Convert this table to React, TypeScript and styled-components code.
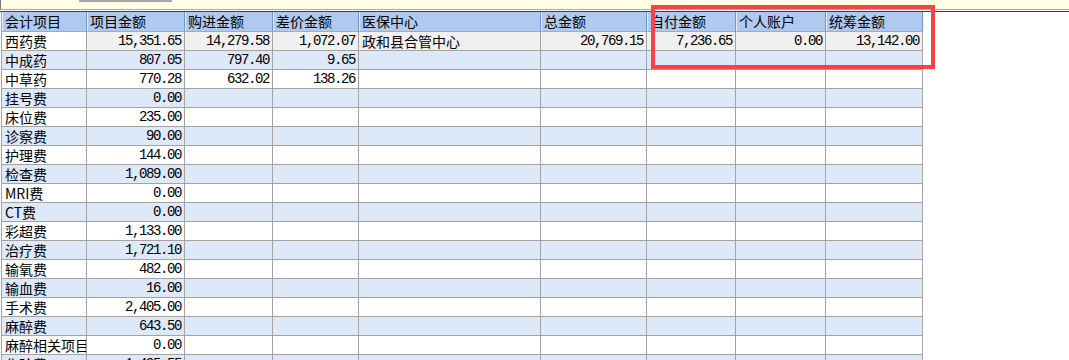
import React from "react";
import styled, { createGlobalStyle, css } from "styled-components";

const GlobalStyle = createGlobalStyle`
  html, body { margin: 0; padding: 0; background: #ffffff; }
  body { font-family: "Noto Sans CJK SC", "Noto Sans", sans-serif; overflow: hidden; }
`;

const Page = styled.div`
  position: relative;
  width: 1069px;
  height: 360px;
  overflow: hidden;
  background: #ffffff;
`;

const TopStrip = styled.div`
  height: 9px;
  background: #fffde6;
  border-left: 1px solid #7a7a7a;
  border-bottom: 1px solid #a8a8a8;
  display: flex;
  align-items: flex-start;
  padding-left: 78px;
`;

const TabStub = styled.div`
  width: 93px;
  height: 2px;
  background: #a6a6a6;
`;

const GridArea = styled.div`
  margin-top: 1px;
  border-top: 1px solid #1d3f9a;
  padding-left: 1px;
`;

const COLS = [85, 98, 88, 86, 182, 106, 89, 90, 97];

const Grid = styled.div`
  display: grid;
  grid-template-columns: ${COLS.map((c) => `${c}px`).join(" ")};
  width: ${COLS.reduce((a, b) => a + b, 0)}px;
  border-left: 1px solid #8aa8d8;
`;

const HeadCell = styled.div`
  box-sizing: border-box;
  height: 20px;
  line-height: 19px;
  padding-left: 3px;
  background: #afcaee;
  border-right: 1px solid #6e94cf;
  border-bottom: 1px solid #8eaee0;
  box-shadow: inset 1px 0 0 #e4eefc;
  font-size: 14px;
  color: #000;
  white-space: nowrap;
  overflow: hidden;
`;

type CellProps = { $num?: boolean; $bg: string };

const Cell = styled.div<CellProps>`
  box-sizing: border-box;
  height: 19px;
  line-height: 18px;
  background: ${(p) => p.$bg};
  border-right: 1px solid #a3a3a3;
  border-bottom: 1px solid #a3a3a3;
  color: #000;
  white-space: nowrap;
  overflow: hidden;
  ${(p) =>
    p.$num
      ? css`
          text-align: right;
          padding-right: 3px;
          font-family: "Liberation Mono", "DejaVu Sans Mono", monospace;
          font-size: 14px;
          letter-spacing: -1.4px;
        `
      : css`
          padding-left: 3px;
          font-size: 14px;
        `}
`;

const Annotation = styled.div`
  position: absolute;
  left: 651px;
  top: 5px;
  width: 284px;
  height: 64px;
  box-sizing: border-box;
  border: 4px solid #fb4242;
  pointer-events: none;
`;

const headers = ["会计项目", "项目金额", "购进金额", "差价金额", "医保中心", "总金额", "自付金额", "个人账户", "统筹金额"];

const rows: string[][] = [
  ["西药费", "15,351.65", "14,279.58", "1,072.07", "政和县合管中心", "20,769.15", "7,236.65", "0.00", "13,142.00"],
  ["中成药", "807.05", "797.40", "9.65"],
  ["中草药", "770.28", "632.02", "138.26"],
  ["挂号费", "0.00"],
  ["床位费", "235.00"],
  ["诊察费", "90.00"],
  ["护理费", "144.00"],
  ["检查费", "1,089.00"],
  ["MRI费", "0.00"],
  ["CT费", "0.00"],
  ["彩超费", "1,133.00"],
  ["治疗费", "1,721.10"],
  ["输氧费", "482.00"],
  ["输血费", "16.00"],
  ["手术费", "2,405.00"],
  ["麻醉费", "643.50"],
  ["麻醉相关项目", "0.00"],
  ["化验费", "1,495.55"],
];

const cellBg = (r: number, c: number) => {
  if (r === 0) return c === 0 ? "#ffffff" : "#f0f0f0";
  return r % 2 === 1 ? "#dde8f9" : "#ffffff";
};

export default function App() {
  return (
    <Page>
      <GlobalStyle />
      <TopStrip>
        <TabStub />
      </TopStrip>
      <GridArea>
        <Grid>
          {headers.map((h) => (
            <HeadCell key={h}>{h}</HeadCell>
          ))}
          {rows.map((row, r) =>
            headers.map((_, c) => {
              const v = row[c] ?? "";
              const isNum = c !== 0 && c !== 4;
              return (
                <Cell key={`${r}-${c}`} $num={isNum} $bg={cellBg(r, c)}>
                  {v}
                </Cell>
              );
            })
          )}
        </Grid>
      </GridArea>
      <Annotation />
    </Page>
  );
}
